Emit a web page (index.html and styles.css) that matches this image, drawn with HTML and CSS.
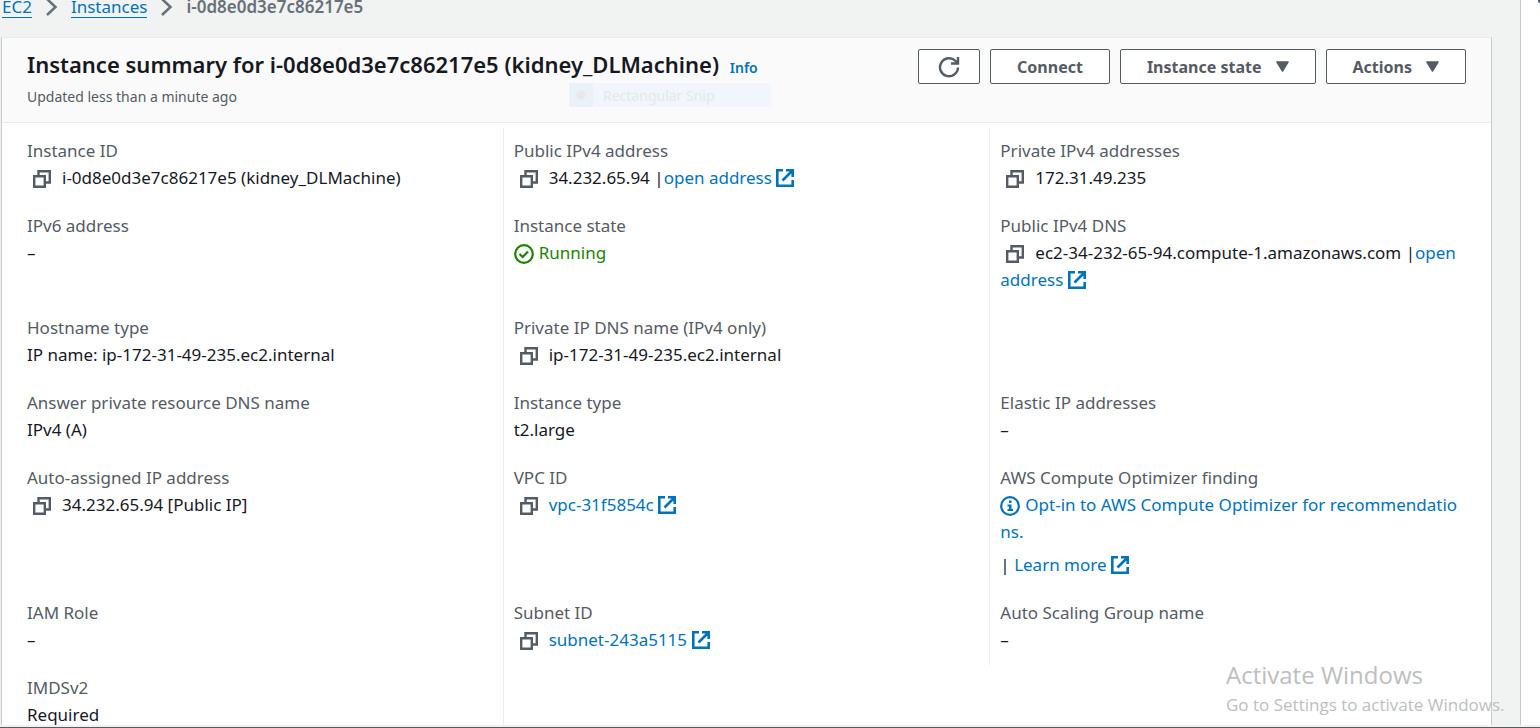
FILE: index.html
```
<!DOCTYPE html>
<html lang="en">
<head>
<meta charset="utf-8">
<title>Instance summary</title>
<link rel="stylesheet" href="styles.css">
</head>
<body>
<svg class="sprite" aria-hidden="true">
  <symbol id="copy" viewBox="0 0 18 18"><path d="M1.200 6.200h10.600v10.600H1.200zM5.500 6V1.200h11.300v11.300H12" fill="none" stroke="currentColor" stroke-width="2.400"/></symbol>
  <symbol id="external" viewBox="0 0 18 18"><path d="M7 1.300H1.300v15.400h15.400V11M10 1.300h6.700V8M16.500 1.500L6.500 11.500" fill="none" stroke="currentColor" stroke-width="2.600"/></symbol>
  <symbol id="chevron" viewBox="0 0 12 18"><path d="M1.500 1l8.500 8-8.500 8" fill="none" stroke="currentColor" stroke-width="2.500"/></symbol>
  <symbol id="caret" viewBox="0 0 13 11"><path d="M1 1h11L6.500 10z" fill="currentColor" stroke="currentColor" stroke-width="1.500" stroke-linejoin="round"/></symbol>
</svg>
<div class="shell">
  <main class="main">
    <nav class="crumbs" aria-label="Breadcrumb">
      <a href="#">EC2</a>
      <svg class="chevron"><use href="#chevron"/></svg>
      <a href="#">Instances</a>
      <svg class="chevron"><use href="#chevron"/></svg>
      <span class="current">i-0d8e0d3e7c86217e5</span>
    </nav>
    <section class="card">
      <header class="card-head">
        <div class="heading">
          <h1>Instance summary for i-0d8e0d3e7c86217e5 (kidney_DLMachine) <a class="info" href="#">Info</a></h1>
          <p class="updated">Updated less than a minute ago</p>
          <div class="snip"><span class="snip-dot"></span>Rectangular Snip</div>
        </div>
        <div class="actions">
          <button class="btn refresh" aria-label="Refresh"><svg viewBox="0 0 22 22"><path d="M20 11.500A9 9 0 1 1 17.500 5L20 7.200" fill="none" stroke="currentColor" stroke-width="2.400"/><path d="M20 1V7.500h-7" fill="none" stroke="currentColor" stroke-width="2.400"/></svg></button>
          <button class="btn">Connect</button>
          <button class="btn">Instance state <svg class="caret"><use href="#caret"/></svg></button>
          <button class="btn">Actions <svg class="caret"><use href="#caret"/></svg></button>
        </div>
      </header>
      <dl class="details">
        <div class="cell"><dt>Instance ID</dt><dd><svg class="copy"><use href="#copy"/></svg>i-0d8e0d3e7c86217e5 (kidney_DLMachine)</dd></div>
        <div class="cell"><dt>Public IPv4 address</dt><dd><svg class="copy"><use href="#copy"/></svg>34.232.65.94 |<a href="#">open address <svg class="ext"><use href="#external"/></svg></a></dd></div>
        <div class="cell"><dt>Private IPv4 addresses</dt><dd><svg class="copy"><use href="#copy"/></svg>172.31.49.235</dd></div>

        <div class="cell"><dt>IPv6 address</dt><dd>–</dd></div>
        <div class="cell"><dt>Instance state</dt><dd class="running"><svg class="status" viewBox="0 0 20 20"><circle cx="10" cy="10" r="8.800" fill="none" stroke="currentColor" stroke-width="2.200"/><path d="M5.500 10l3.200 3 5.300-5.500" fill="none" stroke="currentColor" stroke-width="2.200"/></svg>Running</dd></div>
        <div class="cell"><dt>Public IPv4 DNS</dt><dd><svg class="copy"><use href="#copy"/></svg>ec2-34-232-65-94.compute-1.amazonaws.com |<a href="#">open address <svg class="ext"><use href="#external"/></svg></a></dd></div>

        <div class="cell"><dt>Hostname type</dt><dd>IP name: ip-172-31-49-235.ec2.internal</dd></div>
        <div class="cell"><dt>Private IP DNS name (IPv4 only)</dt><dd><svg class="copy"><use href="#copy"/></svg>ip-172-31-49-235.ec2.internal</dd></div>
        <div class="cell"></div>

        <div class="cell"><dt>Answer private resource DNS name</dt><dd>IPv4 (A)</dd></div>
        <div class="cell"><dt>Instance type</dt><dd>t2.large</dd></div>
        <div class="cell"><dt>Elastic IP addresses</dt><dd>–</dd></div>

        <div class="cell"><dt>Auto-assigned IP address</dt><dd><svg class="copy"><use href="#copy"/></svg>34.232.65.94 [Public IP]</dd></div>
        <div class="cell"><dt>VPC ID</dt><dd><svg class="copy"><use href="#copy"/></svg><a href="#">vpc-31f5854c <svg class="ext"><use href="#external"/></svg></a></dd></div>
        <div class="cell"><dt>AWS Compute Optimizer finding</dt><dd><a class="optin" href="#"><svg class="status" viewBox="0 0 20 20"><circle cx="10" cy="10" r="8.800" fill="none" stroke="currentColor" stroke-width="2.200"/><path d="M9 4.500h2.500V7H9zM7.500 8.500h4V13H13v2H7.500v-2H9v-2.500H7.500z" fill="currentColor"/></svg>Opt-in to AWS Compute Optimizer for recommendations.</a></dd><dd class="more">| <a href="#">Learn more <svg class="ext"><use href="#external"/></svg></a></dd></div>

        <div class="cell"><dt>IAM Role</dt><dd>–</dd></div>
        <div class="cell"><dt>Subnet ID</dt><dd><svg class="copy"><use href="#copy"/></svg><a href="#">subnet-243a5115 <svg class="ext"><use href="#external"/></svg></a></dd></div>
        <div class="cell"><dt>Auto Scaling Group name</dt><dd>–</dd></div>

        <div class="cell"><dt>IMDSv2</dt><dd>Required</dd></div>
        <div class="cell"></div>
      </dl>
    </section>
  </main>
  <aside class="side"><span class="side-knob"></span></aside>
</div>
<div class="splitter"></div>
<div class="watermark"><p class="wm-title">Activate Windows</p><p class="wm-text">Go to Settings to activate Windows.</p></div>
</body>
</html>
```
FILE: styles.css
```
* { box-sizing: border-box; }
body {
  margin: 0;
  height: 100vh;
  display: flex;
  flex-direction: column;
  overflow: hidden;
  position: relative;
  background: #f1f3f3;
  color: #16191f;
  font: 17px/27px "Noto Sans", "Open Sans", sans-serif;
}
.sprite { display: none; }
a { color: #0073bb; text-decoration: none; }
h1, p, dl, dt, dd { margin: 0; }
.shell { flex: 1; min-height: 0; display: flex; overflow: hidden; }
.main { flex: 1; min-width: 0; padding: 0 28px 0 1px; }
.crumbs {
  display: flex;
  align-items: center;
  gap: 13px;
  height: 37px;
  padding: 0 0 23px 1px;
  line-height: 20px;
}
.crumbs a { border-bottom: 1px solid #0073bb; }
.crumbs .current { color: #687078; font-weight: 600; }
.chevron { width: 13px; height: 18px; color: #687078; }
.card {
  background: #fff;
  border: 1px solid #c5cbcb;
  border-top-color: #eaeded;
}
.card-head {
  display: flex;
  justify-content: space-between;
  align-items: flex-start;
  height: 85px;
  padding: 11px 25px 0;
  background: #fafafa;
  border-bottom: 1px solid #eaeded;
}
.heading { position: relative; }
h1 { font-size: 22px; line-height: 30px; font-weight: 600; white-space: nowrap; }
.info { font-size: 14px; margin-left: 5px; }
.updated { font-size: 14px; line-height: 28px; color: #545b64; }
.snip {
  position: absolute;
  left: 542px;
  top: 34px;
  width: 202px;
  height: 24px;
  display: flex;
  align-items: center;
  gap: 10px;
  background: #f0f6fb;
  color: #e6e8ea;
  font-size: 14px;
}
.snip-dot { width: 24px; height: 24px; background: radial-gradient(circle, #e6e8ea 4px, #eaf2f9 5px); }
.actions { display: flex; gap: 10px; }
.btn {
  height: 35px;
  padding: 0 26px;
  display: flex;
  align-items: center;
  gap: 14px;
  font: 700 16px/22px "Noto Sans", "Open Sans", sans-serif;
  color: #545b64;
  background: #fff;
  border: 1px solid #545b64;
  border-radius: 2px;
  white-space: nowrap;
}
.refresh { padding: 0 19px; }
.refresh svg { width: 22px; height: 22px; }
.caret { width: 13px; height: 11px; }
.details {
  display: grid;
  grid-template-columns: repeat(3, minmax(0, 1fr));
  padding: 5px 15px 0 14px;
}
.cell { padding: 9px 10px 12px; border-left: 1px solid #eaeded; min-height: 75px; }
.cell:nth-child(3n+1) { border-left-color: transparent; }
dt { color: #545b64; }
.more { margin-top: 6px; }
.copy { width: 18px; height: 18px; margin: 0 11px 0 6px; vertical-align: -4px; color: #545b64; }
.ext { width: 18px; height: 18px; vertical-align: -3px; }
.status { width: 20px; height: 20px; margin-right: 5px; vertical-align: -5px; }
.running { color: #1d8102; }
.optin { word-break: break-all; }
.side { width: 20px; background: #fff; border-left: 1px solid #c5cbcb; position: relative; }
.side-knob { position: absolute; right: 0; top: 0; width: 2px; height: 3px; background: #545b64; border-bottom-left-radius: 2px; }
.splitter { height: 3px; background: #f1f3f3; border-bottom: 1px solid #545b64; }
.watermark {
  position: absolute;
  left: calc(100% - 314px);
  bottom: 10px;
  white-space: nowrap;
  color: #bcbebf;
  font-family: "Open Sans", "Noto Sans", sans-serif;
}
.wm-title { font-size: 24px; line-height: 34px; }
.wm-text { font-size: 17px; line-height: 26px; }
```
